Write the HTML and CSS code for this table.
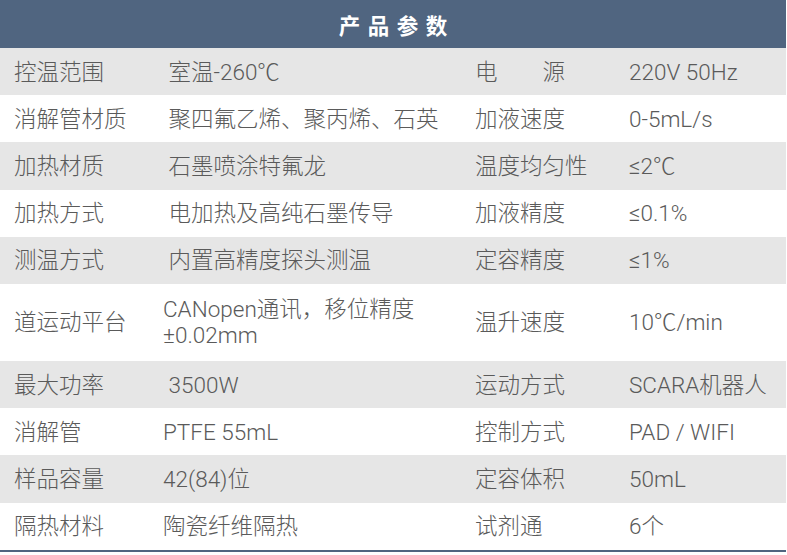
FILE: index.html
```html
<!DOCTYPE html>
<html lang="zh-CN">
<head>
<meta charset="utf-8">
<title>产品参数</title>
<link rel="stylesheet" href="styles.css">
</head>
<body>
<div class="spec">
  <div class="head"><span class="head-title">产品参数</span></div>
  <div class="row alt"><div class="k">控温范围</div><div class="v"> 室温-260℃</div><div class="k2">电　　源</div><div class="v2">220V 50Hz</div></div>
  <div class="row"><div class="k">消解管材质</div><div class="v"> 聚四氟乙烯、聚丙烯、石英</div><div class="k2">加液速度</div><div class="v2">0-5mL/s</div></div>
  <div class="row alt"><div class="k">加热材质</div><div class="v"> 石墨喷涂特氟龙</div><div class="k2">温度均匀性</div><div class="v2">≤2℃</div></div>
  <div class="row"><div class="k">加热方式</div><div class="v"> 电加热及高纯石墨传导</div><div class="k2">加液精度</div><div class="v2">≤0.1%</div></div>
  <div class="row alt"><div class="k">测温方式</div><div class="v"> 内置高精度探头测温</div><div class="k2">定容精度</div><div class="v2">≤1%</div></div>
  <div class="row tall"><div class="k">道运动平台</div><div class="v">CANopen通讯，移位精度<br>±0.02mm</div><div class="k2">温升速度</div><div class="v2">10℃/min</div></div>
  <div class="row alt"><div class="k">最大功率</div><div class="v"> 3500W</div><div class="k2">运动方式</div><div class="v2">SCARA机器人</div></div>
  <div class="row"><div class="k">消解管</div><div class="v">PTFE 55mL</div><div class="k2">控制方式</div><div class="v2">PAD / WIFI</div></div>
  <div class="row alt"><div class="k">样品容量</div><div class="v">42(84)位</div><div class="k2">定容体积</div><div class="v2">50mL</div></div>
  <div class="row last"><div class="k">隔热材料</div><div class="v">陶瓷纤维隔热</div><div class="k2">试剂通</div><div class="v2">6个</div></div>
</div>
</body>
</html>
```

FILE: styles.css
```css
html, body {
  margin: 0;
  padding: 0;
  background: #ffffff;
}

.spec {
  width: 786px;
  font-family: "Roboto", "Noto Sans CJK SC", sans-serif;
  font-weight: 300;
  color: #5a5a5a;
  font-size: 22.5px;
}

.head {
  height: 48px;
  background: #506580;
  display: flex;
  align-items: center;
  justify-content: center;
}

.head-title {
  color: #ffffff;
  font-family: "Noto Sans CJK SC", sans-serif;
  font-weight: 700;
  font-size: 21.5px;
  letter-spacing: 7.5px;
  margin-right: -7.5px;
}

.row {
  display: grid;
  grid-template-columns: 149px 312px 154px 1fr;
  height: 47.2px;
  align-items: center;
  background: #ffffff;
}

.row.alt {
  background: #e6e6e6;
}

.row.tall {
  height: 77px;
}

.row.last {
  border-bottom: 2px solid #506580;
}

.k, .v, .k2, .v2 {
  white-space: pre;
  line-height: 26px;
  padding-left: 14px;
}
```
